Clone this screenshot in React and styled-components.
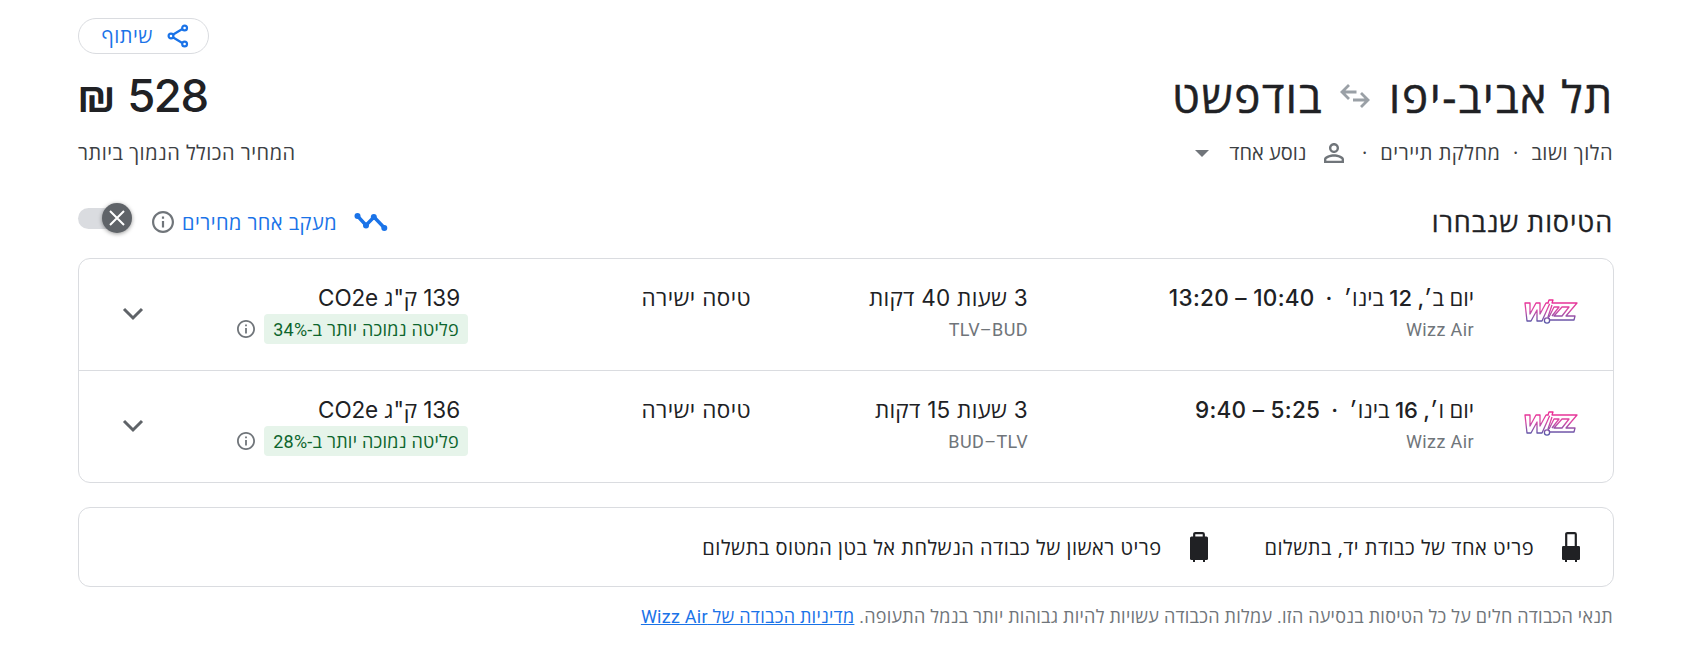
import React, { useState } from 'react';
import styled, { createGlobalStyle } from 'styled-components';

const GlobalStyle = createGlobalStyle`
    * {
        box-sizing: border-box;
    }
    body {
        margin: 0;
        background: #fff;
        color: #202124;
        font-family: "Inter", "Open Sans", "Liberation Sans", sans-serif;
    }
`

const Page = styled.main`
    width: 1536px;
    margin-left: 78px;
    padding-top: 18px;
    display: flex;
    flex-direction: column;
`

const TopBar = styled.div`
    display: flex;
    justify-content: flex-end;
`

const ShareButton = styled.button`
    display: flex;
    align-items: center;
    width: 131px;
    height: 36px;
    padding: 0 19px 0 0;
    gap: 14px;
    border: 1px solid #dadce0;
    border-radius: 18px;
    background: #fff;
    color: #1a73e8;
    font-family: "Open Sans", sans-serif;
    font-size: 20px;
    font-weight: 500;
    line-height: 34px;
    letter-spacing: 0.5px;
`

const HeadRow = styled.div`
    display: flex;
    justify-content: space-between;
    align-items: center;
    height: 84px;
`

const RouteTitle = styled.h1`
    display: flex;
    align-items: center;
    margin: 0;
    font-family: "Open Sans", sans-serif;
    font-size: 44px;
    font-weight: 400;
    line-height: 60px;
    -webkit-text-stroke: 0.5px #202124;

    svg {
        margin: 0 19px 0 17px;
    }
`

const City = styled.span`
    letter-spacing: ${props => props.$spacing || '1.6px'};
`

const Price = styled.div`
    font-family: "Inter", "Open Sans", sans-serif;
    font-size: 45.5px;
    font-weight: 500;
    line-height: 60px;
    letter-spacing: -1.4px;
    word-spacing: 2px;
    transform: translateX(-1px);
`

const DetailRow = styled.div`
    display: flex;
    justify-content: space-between;
    align-items: center;
    height: 30px;
    padding-right: 1px;
    color: #3c4043;
    font-family: "Open Sans", sans-serif;
    font-size: 20px;
    line-height: 30px;
    letter-spacing: 0.5px;
`

const TripDetails = styled.div`
    display: flex;
    align-items: center;
`

const Dot = styled.span`
    width: 31px;
    text-align: center;
`

const Passengers = styled.span`
    display: flex;
    align-items: center;
    margin-right: 5px;
    gap: 18px;
    letter-spacing: 0;
`

const Caret = styled.span`
    margin-right: 20px;
    border: 7px solid transparent;
    border-top-color: #70757a;
    border-bottom: 0;
`

const SectionRow = styled.div`
    display: flex;
    justify-content: space-between;
    align-items: center;
    height: 90px;
    padding: 18px 1px 0 0;
`

const SectionTitle = styled.h2`
    margin: 0;
    font-family: "Open Sans", sans-serif;
    font-size: 27px;
    font-weight: 400;
    line-height: 36px;
    letter-spacing: 0.9px;
    -webkit-text-stroke: 0.3px #202124;
`

const Tracking = styled.div`
    display: flex;
    align-items: center;
    color: #1a73e8;
    font-family: "Open Sans", sans-serif;
    font-size: 20px;
    font-weight: 500;
    letter-spacing: 0.45px;
`

const TrackingLabel = styled.span`
    margin: 0 17px 0 8px;
`

const Toggle = styled.button`
    position: relative;
    width: 54px;
    height: 21px;
    margin: 0 20px 8px 0;
    padding: 0;
    border: 0;
    border-radius: 11px;
    background: linear-gradient(to right, #dadce0 48px, transparent 48px);
`

const Knob = styled.span`
    position: absolute;
    top: -5px;
    left: 24px;
    display: flex;
    align-items: center;
    justify-content: center;
    width: 30px;
    height: 30px;
    border-radius: 50%;
    background: #5f6368;
    box-shadow: 0 1px 4px rgba(0, 0, 0, 0.4);
`

const FlightCard = styled.section`
    border: 1px solid #dadce0;
    border-radius: 12px;
`

const FlightRow = styled.div`
    display: grid;
    grid-template-columns: 139px 446px 277px 283px 1fr;
    height: ${props => props.$last ? '111px' : '112px'};
    padding-top: 24px;
    border-bottom: ${props => props.$last ? '0' : '1px solid #dadce0'};
`

const LogoCell = styled.div`
    padding: 15px 35px 0 0;
`

const Primary = styled.div`
    font-size: 22.5px;
    line-height: 30px;
    letter-spacing: ${props => props.$spacing || '0.3px'};
    white-space: nowrap;
`

const Schedule = styled(Primary)`
    display: flex;
    font-weight: 500;
`

const FlightDate = styled.span`
    font-size: 22px;
    letter-spacing: 0;
    word-spacing: -0.5px;
`

const ScheduleDot = styled.span`
    width: 29px;
    text-align: center;
`

const Secondary = styled.div`
    margin-top: 2px;
    color: #70757a;
    font-family: "Roboto", sans-serif;
    font-size: 18px;
    line-height: 30px;
    letter-spacing: 0.4px;
`

const Emissions = styled.div`
    display: flex;
    flex-direction: column;
    width: 240px;

    ${Primary} {
        padding-right: 8px;
    }
`

const BadgeLine = styled.div`
    display: flex;
    align-items: center;
    gap: 9px;
    margin-top: 1px;
`

const Badge = styled.span`
    width: 204px;
    height: 30px;
    padding-right: 9px;
    border-radius: 4px;
    background: #e6f4ea;
    color: #0d652d;
    font-family: "Roboto", "Open Sans", sans-serif;
    font-size: 18px;
    line-height: 31px;
    letter-spacing: 0.25px;
    white-space: nowrap;
`

const EmissionsCell = styled.div`
    display: flex;
    justify-content: space-between;
`

const ExpandCell = styled.div`
    padding: 22px 0 0 43px;
`

const BaggageCard = styled.section`
    display: flex;
    align-items: center;
    height: 80px;
    margin-top: 24px;
    padding-right: 33px;
    border: 1px solid #dadce0;
    border-radius: 12px;
    font-family: "Open Sans", sans-serif;
    font-size: 20px;
    letter-spacing: 0.48px;
`

const BaggageItem = styled.div`
    display: flex;
    align-items: center;
    gap: 28px;
    margin-left: 57px;
`

const Footnote = styled.p`
    margin: 15px 0 0;
    padding-right: 1px;
    color: #70757a;
    font-family: "Roboto", "Open Sans", sans-serif;
    font-size: 18px;
    line-height: 30px;
    letter-spacing: 0.26px;

    a {
        color: #1a73e8;
        text-decoration: underline;
    }
`

const flights = [
    {
        date: 'יום ב׳, 12 בינו׳',
        time: ['10:40', '13:20'],
        duration: '3 שעות 40 דקות',
        route: 'TLV–BUD',
        co2: '139',
        percent: '34%'
    },
    {
        date: 'יום ו׳, 16 בינו׳',
        time: ['5:25', '9:40'],
        duration: '3 שעות 15 דקות',
        route: 'BUD–TLV',
        co2: '136',
        percent: '28%'
    }
];

function ShareIcon() {
    return (
        <svg width="22" height="24" viewBox="0 0 22 24" fill="none" stroke="#1a73e8" strokeWidth="2.2">
            <path d="M5.8 10.8 15.3 5M5.8 13.2l9.5 5.8" />
            <circle cx="4" cy="12" r="2.4" />
            <circle cx="17.6" cy="4" r="2.4" />
            <circle cx="17.6" cy="20" r="2.4" />
        </svg>
    )
}

function RoundTripIcon() {
    return (
        <svg width="30" height="26" viewBox="0 0 30 26" fill="none" stroke="#9aa0a6" strokeWidth="2.8">
            <path d="M16.5 9H2.5M9 2 2 9l7 7M13 17h14M21 10l7 7-7 7" />
        </svg>
    )
}

function PersonIcon() {
    return (
        <svg width="20" height="20" viewBox="4 4 16 16" fill="#70757a">
            <path d="M12 5.9a2.1 2.1 0 1 1 0 4.2 2.1 2.1 0 0 1 0-4.2m0 9c2.97 0 6.1 1.46 6.1 2.1v1.1H5.9V17c0-.64 3.13-2.1 6.1-2.1M12 4C9.79 4 8 5.79 8 8s1.79 4 4 4 4-1.79 4-4-1.79-4-4-4zm0 9c-2.67 0-8 1.34-8 4v3h16v-3c0-2.66-5.33-4-8-4z" />
        </svg>
    )
}

function InfoIcon({ size }) {
    return (
        <svg width={size} height={size} viewBox="2 2 20 20" fill="#70757a">
            <path d="M11 7h2v2h-2zm0 4h2v6h-2zm1-9C6.48 2 2 6.48 2 12s4.48 10 10 10 10-4.48 10-10S17.52 2 12 2zm0 18c-4.41 0-8-3.59-8-8s3.59-8 8-8 8 3.59 8 8-3.59 8-8 8z" />
        </svg>
    )
}

function TrendIcon() {
    return (
        <svg width="34" height="20" viewBox="0 0 34 20">
            <path d="M3.5 4 12 13.2 20 5l10.5 11" fill="none" stroke="#1a73e8" strokeWidth="3.4" />
            <g fill="#1a73e8">
                <circle cx="3.5" cy="4" r="3" />
                <circle cx="12" cy="13.4" r="3" />
                <circle cx="19.8" cy="5" r="3" />
                <circle cx="30.3" cy="16" r="3" />
            </g>
        </svg>
    )
}

function CloseIcon() {
    return (
        <svg width="16" height="16" viewBox="0 0 16 16" stroke="#fff" strokeWidth="2">
            <path d="M1 1l14 14M15 1 1 15" />
        </svg>
    )
}

function ChevronIcon() {
    return (
        <svg width="22" height="14" viewBox="0 0 22 14" fill="none" stroke="#5f6368" strokeWidth="3">
            <path d="M2 2l9 9 9-9" />
        </svg>
    )
}

function WizzLogo() {
    return (
        <svg width="54" height="27" viewBox="0 0 54 27">
            <defs>
                <linearGradient id="wizz" gradientUnits="userSpaceOnUse" x1="0" y1="2" x2="0" y2="24">
                    <stop offset="0" stopColor="#ec2a92" />
                    <stop offset="0.45" stopColor="#d94ba6" />
                    <stop offset="1" stopColor="#5b57a8" />
                </linearGradient>
            </defs>
            <g fill="#fff" stroke="url(#wizz)" strokeWidth="1.3" strokeLinejoin="round">
                <path d="M1 5h5v11L12 5h4v11l6-11h4L18 23h-5V12L7 23H3z" />
                <path d="M24 5l1-3h4l-1 3h25l-11 13h9l-1 4H26l-2-3 4-12" />
                <path d="M28 18l7-9h-5l-5 10M38 18l7-9h-7l-8 9z" />
                <circle cx="23" cy="22.5" r="2.6" />
            </g>
        </svg>
    )
}

function CarryOnIcon() {
    return (
        <svg width="18" height="30" viewBox="0 0 18 30" fill="#202124">
            <path d="M4.2 15V2.3q0-1.2 1.2-1.2h7.2q1.2 0 1.2 1.2V15" fill="none" stroke="#202124" strokeWidth="2.2" />
            <rect y="14" width="18" height="14" rx="1.2" />
            <path d="M3 27h2v3H3zM13 27h2v3h-2z" />
        </svg>
    )
}

function SuitcaseIcon() {
    return (
        <svg width="18" height="30" viewBox="0 0 18 30" fill="#202124">
            <path d="M4.2 6V2.3q0-1.2 1.2-1.2h7.2q1.2 0 1.2 1.2V6" fill="none" stroke="#202124" strokeWidth="2.2" />
            <rect y="4.5" width="18" height="23.5" rx="1.5" />
            <path d="M3 27h2v3H3zM13 27h2v3h-2z" />
        </svg>
    )
}

function Flight(props) {
    const { flight, last } = props;

    return (
        <FlightRow $last={last}>
            <LogoCell><WizzLogo /></LogoCell>
            <div>
                <Schedule>
                    <FlightDate>{flight.date}</FlightDate>
                    <ScheduleDot>·</ScheduleDot>
                    <span>{flight.time[0]} – {flight.time[1]}</span>
                </Schedule>
                <Secondary>Wizz Air</Secondary>
            </div>
            <div>
                <Primary $spacing="0.25px">{flight.duration}</Primary>
                <Secondary><bdi>{flight.route}</bdi></Secondary>
            </div>
            <Primary $spacing="0.4px">טיסה ישירה</Primary>
            <EmissionsCell>
                <Emissions>
                    <Primary $spacing="-0.1px">{flight.co2} ק"ג CO2e</Primary>
                    <BadgeLine>
                        <Badge>פליטה נמוכה יותר ב-<bdi>{flight.percent}</bdi></Badge>
                        <InfoIcon size={18} />
                    </BadgeLine>
                </Emissions>
                <ExpandCell><ChevronIcon /></ExpandCell>
            </EmissionsCell>
        </FlightRow>
    )
}

function App() {
    const [tracking, setTracking] = useState(false);

    return (
        <Page dir="rtl">
            <GlobalStyle />
            <TopBar>
                <ShareButton><ShareIcon />שיתוף</ShareButton>
            </TopBar>
            <HeadRow>
                <RouteTitle>
                    <City $spacing="1.8px">תל אביב-יפו</City>
                    <RoundTripIcon />
                    <City>בודפשט</City>
                </RouteTitle>
                <Price>528 ₪</Price>
            </HeadRow>
            <DetailRow>
                <TripDetails>
                    <span>הלוך ושוב</span>
                    <Dot>·</Dot>
                    <span>מחלקת תיירים</span>
                    <Dot>·</Dot>
                    <Passengers><PersonIcon />נוסע אחד</Passengers>
                    <Caret />
                </TripDetails>
                <span>המחיר הכולל הנמוך ביותר</span>
            </DetailRow>
            <SectionRow>
                <SectionTitle>הטיסות שנבחרו</SectionTitle>
                <Tracking>
                    <TrendIcon />
                    <TrackingLabel>מעקב אחר מחירים</TrackingLabel>
                    <InfoIcon size={22} />
                    <Toggle aria-pressed={tracking} onClick={() => setTracking(!tracking)}>
                        <Knob><CloseIcon /></Knob>
                    </Toggle>
                </Tracking>
            </SectionRow>
            <FlightCard>
                {flights.map((flight, index) => (
                    <Flight key={flight.route} flight={flight} last={index === flights.length - 1} />
                ))}
            </FlightCard>
            <BaggageCard>
                <BaggageItem><CarryOnIcon />פריט אחד של כבודת יד, בתשלום</BaggageItem>
                <BaggageItem><SuitcaseIcon />פריט ראשון של כבודה הנשלחת אל בטן המטוס בתשלום</BaggageItem>
            </BaggageCard>
            <Footnote>
                תנאי הכבודה חלים על כל הטיסות בנסיעה הזו. עמלות הכבודה עשויות להיות גבוהות יותר בנמל התעופה. <a>מדיניות הכבודה של Wizz Air</a>
            </Footnote>
        </Page>
    )
}

export default App;
